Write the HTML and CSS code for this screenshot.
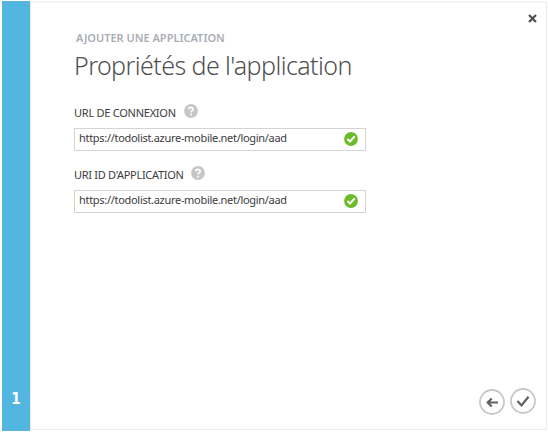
FILE: index.html
```html
<!DOCTYPE html>
<html lang="fr">
<head>
<meta charset="utf-8">
<title>Ajouter une application</title>
<link rel="stylesheet" href="styles.css">
</head>
<body>
<div class="dialog">
  <aside class="steps"><span class="step">1</span></aside>
  <main class="panel">
    <button class="close" aria-label="Fermer"><svg width="9" height="9" viewBox="0 0 9 9"><path d="M1 1L8 8M8 1L1 8"/></svg></button>
    <p class="eyebrow">AJOUTER UNE APPLICATION</p>
    <h1 class="title">Propriétés de l'application</h1>
    <form class="form">
      <div class="field">
        <div class="label-row">
          <label class="label">URL DE CONNEXION</label>
          <svg class="help" width="14" height="14" viewBox="0 0 14 14"><circle cx="7" cy="7" r="6.9"/><path d="M4.8 5.3C4.9 2.7 9.2 2.8 9.2 5.2C9.2 6.7 7.1 6.7 7.1 8.5M7.1 9.7V11.4"/></svg>
        </div>
        <div class="input"><span class="value">https://todolist.azure-mobile.net/login/aad</span>
          <svg class="valid" width="14" height="14" viewBox="0 0 14 14"><circle cx="7" cy="7" r="6.9"/><path d="M3.5 7L6 9.6L10.6 4.4"/></svg>
        </div>
      </div>
      <div class="field">
        <div class="label-row">
          <label class="label label-uri">URI ID D'APPLICATION</label>
          <svg class="help" width="14" height="14" viewBox="0 0 14 14"><circle cx="7" cy="7" r="6.9"/><path d="M4.8 5.3C4.9 2.7 9.2 2.8 9.2 5.2C9.2 6.7 7.1 6.7 7.1 8.5M7.1 9.7V11.4"/></svg>
        </div>
        <div class="input"><span class="value">https://todolist.azure-mobile.net/login/aad</span>
          <svg class="valid" width="14" height="14" viewBox="0 0 14 14"><circle cx="7" cy="7" r="6.9"/><path d="M3.5 7L6 9.6L10.6 4.4"/></svg>
        </div>
      </div>
    </form>
    <footer class="actions">
      <svg class="round back" width="26" height="26" viewBox="0 0 26 26"><circle cx="13" cy="13" r="12"/><path d="M19 13.5H9M12.7 9.5L8.7 13.5L12.7 17.5"/></svg>
      <svg class="round" width="26" height="26" viewBox="0 0 26 26"><circle cx="13" cy="13" r="12"/><path d="M7.5 13L11.5 17.4L18.5 8.8"/></svg>
    </footer>
  </main>
</div>
</body>
</html>
```
FILE: styles.css
```css
* { box-sizing: border-box; }
body {
  margin: 0;
  padding: 1px 1px 1px 2px;
  height: 432px;
  overflow: hidden;
  background: #fff;
  font-family: "Noto Sans", "Open Sans", sans-serif;
  color: #3c3c3c;
}
.dialog { display: flex; height: 430px; }
.steps {
  width: 28px;
  background: #52b6e1;
  display: flex;
  align-items: flex-end;
  justify-content: center;
  padding-bottom: 22px;
}
.step {
  color: #fff;
  font-family: "DejaVu Sans Condensed", "DejaVu Sans", sans-serif;
  font-size: 15px;
  line-height: 20px;
  font-weight: 700;
}
.panel {
  position: relative;
  flex: 1;
  height: 429px;
  display: flex;
  flex-direction: column;
  border: 1px solid #ececec;
  border-top: 2px solid #f5f5f5;
  padding: 27px 10px 15px 43px;
}
.close {
  position: absolute;
  top: 11px;
  right: 9px;
  width: 9px;
  height: 9px;
  padding: 0;
  border: 0;
  background: none;
}
.close svg { display: block; stroke: #505050; stroke-width: 2.2; }
.eyebrow {
  margin: 0 0 0 2px;
  font-size: 11px;
  line-height: 16px;
  font-weight: 600;
  color: #a9adb5;
  white-space: nowrap;
}
.title {
  margin: 1px 0 0;
  font-size: 25px;
  line-height: 36px;
  font-weight: 300;
  letter-spacing: -0.57px;
  color: #505054;
  white-space: nowrap;
}
.form { margin-top: 21px; }
.field { height: 62px; }
.label-row { display: flex; height: 24px; gap: 8px; }
.label {
  font-size: 11px;
  line-height: 16px;
  padding-top: 1px;
  letter-spacing: -0.25px;
  white-space: nowrap;
}
.label-uri { letter-spacing: -0.31px; }
.help { fill: #c6c6c6; }
.help path { fill: none; stroke: #fff; stroke-width: 1.7; }
.input {
  display: flex;
  align-items: flex-start;
  justify-content: space-between;
  width: 292px;
  height: 23px;
  padding: 3px 7px 0 4px;
  border: 1px solid #d4d4d4;
}
.value {
  font-size: 11px;
  line-height: 12px;
  letter-spacing: -0.3px;
  white-space: nowrap;
}
.valid { fill: #6bbb2b; }
.valid path { fill: none; stroke: #fff; stroke-width: 2; }
.actions { display: flex; gap: 5px; justify-content: flex-end; margin-top: auto; }
.round { fill: none; stroke: #c8c8c8; stroke-width: 1.8; }
.round path { stroke: #606060; stroke-width: 2.2; }
.back { margin-top: 1px; margin-bottom: -1px; }
```
